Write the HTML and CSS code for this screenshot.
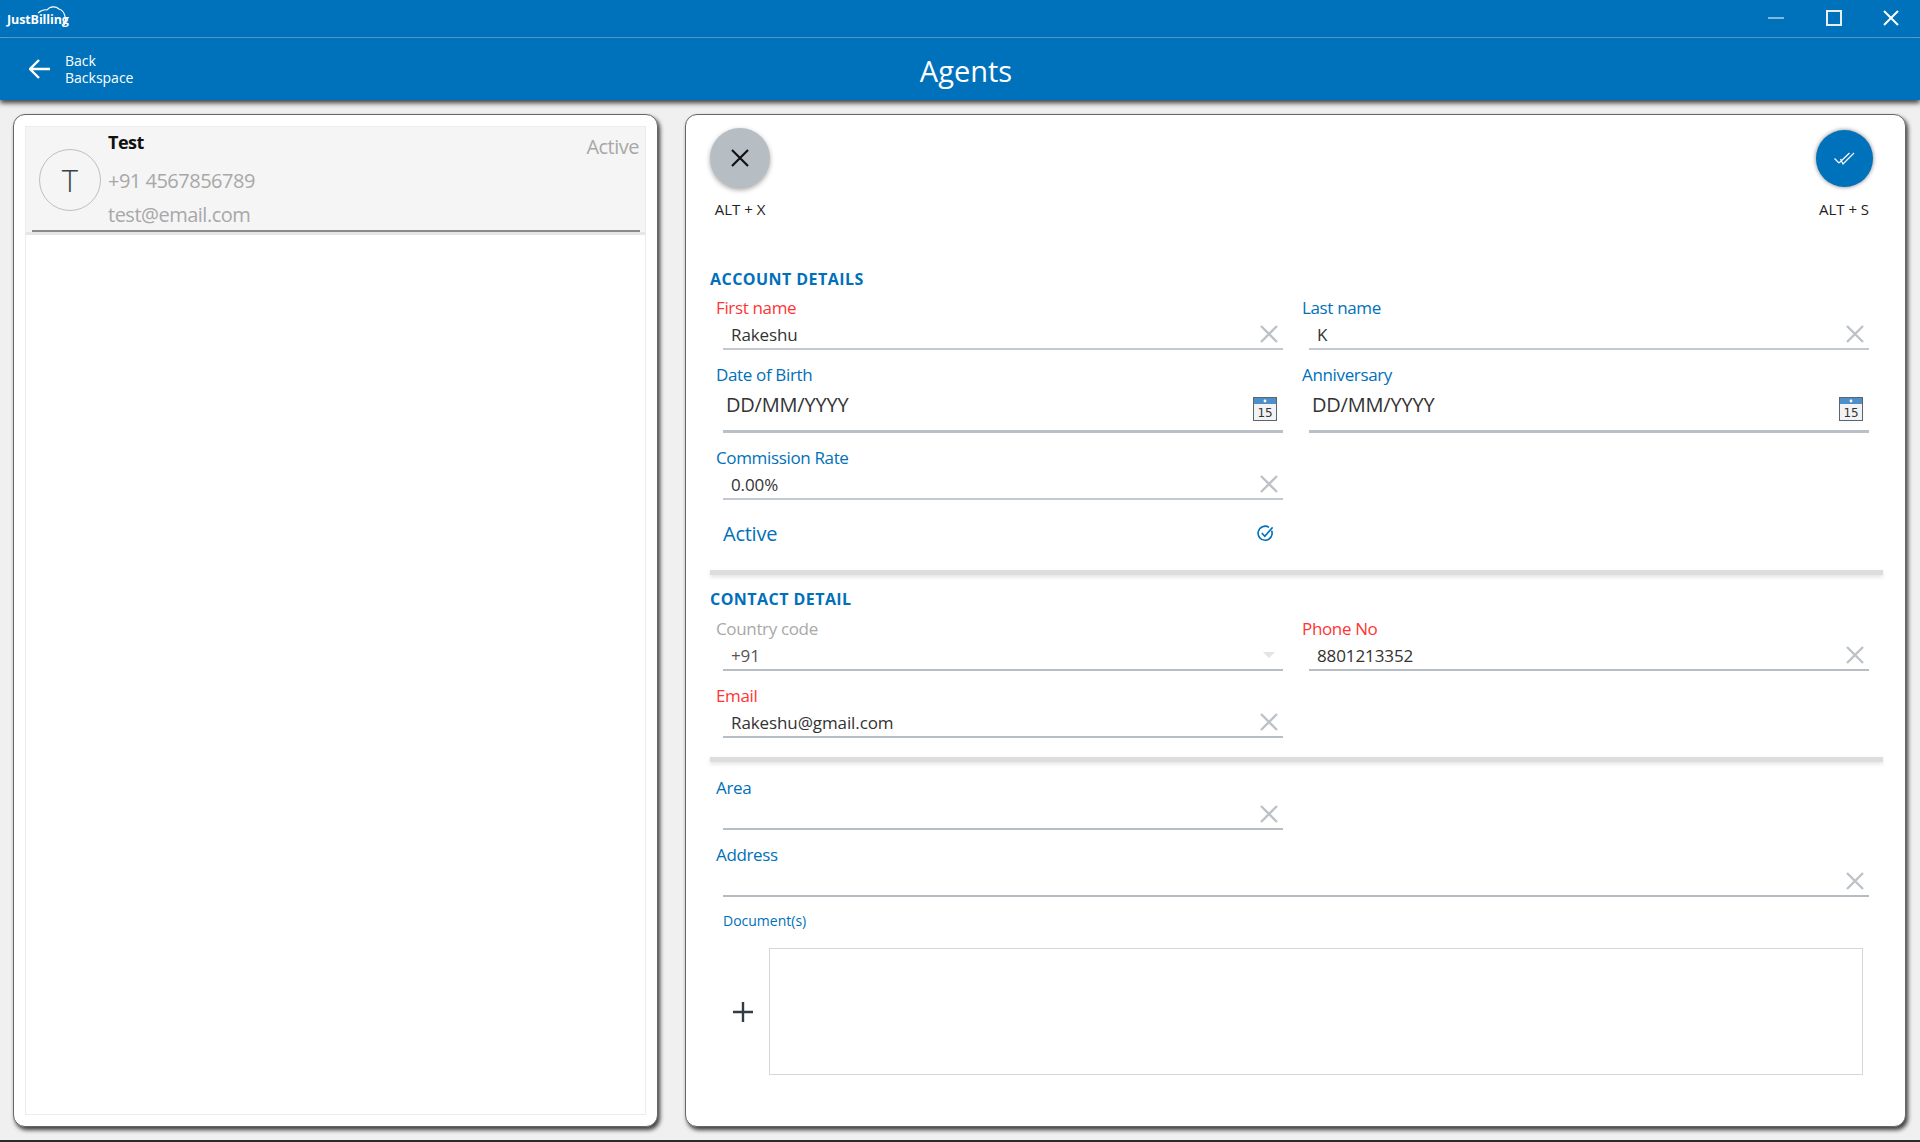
FILE: index.html
```html
<!DOCTYPE html>
<html lang="en">
<head>
    <meta charset="UTF-8">
    <meta name="viewport" content="width=device-width, initial-scale=1.0">
    <title>Agents</title>
    <link rel="stylesheet" href="styles.css">
</head>
<body>
    <div class="titlebar">
        <div class="logo">
            <span class="logo-text">JustBilling</span>
            <svg class="logo-cloud" width="32" height="26" viewBox="0 0 32 26" fill="none" stroke="#fff" stroke-width="1.1">
                <path d="M2 9C6 6 9 5.5 11 6c3-4 9-4 12-1 4 1 6 6 6.500 10 .5 3-.5 5-2.500 7"/>
            </svg>
        </div>
        <div class="window-buttons">
            <svg width="16" height="16" viewBox="0 0 16 16"><path d="M0 8h16" stroke="#fff" stroke-width="1"/></svg>
            <svg width="16" height="16" viewBox="0 0 16 16" fill="none"><rect x="1" y="1" width="14" height="14" stroke="#e8eef4" stroke-width="2"/></svg>
            <svg width="16" height="16" viewBox="0 0 16 16"><path d="M1 1l14 14M15 1L1 15" stroke="#fff" stroke-width="2"/></svg>
        </div>
    </div>

    <div class="toolbar">
        <div class="back">
            <svg width="22" height="20" viewBox="0 0 22 20" fill="none" stroke="#fff" stroke-width="2.4"><path d="M21 10H2M10 1l-9 9 9 9"/></svg>
            <div class="back-text">Back<br>Backspace</div>
        </div>
        <div class="page-title">Agents</div>
    </div>

    <div class="content">
        <div class="card list-card">
            <div class="list-inner">
                <div class="agent-row">
                    <div class="avatar">T</div>
                    <div class="agent-info">
                        <div class="agent-name">Test</div>
                        <div class="agent-sub agent-phone">+91 4567856789</div>
                        <div class="agent-sub agent-email">test@email.com</div>
                    </div>
                    <div class="agent-status">Active</div>
                </div>
            </div>
        </div>

        <div class="card form-card">
            <div class="actions">
                <div class="action">
                    <div class="round-btn cancel-btn">
                        <svg width="18" height="18" viewBox="0 0 18 18"><path d="M1 1l16 16M17 1L1 17" stroke="#111" stroke-width="2.2"/></svg>
                    </div>
                    <div class="shortcut">ALT + X</div>
                </div>
                <div class="action">
                    <div class="round-btn save-btn">
                        <svg width="21" height="13" viewBox="0 0 21 13" fill="none" stroke="#fff" stroke-width="1.2"><path d="M0.500 6.500L5 11M5 11L15.500 1M6.500 7L9 12 20 1"/></svg>
                    </div>
                    <div class="shortcut">ALT + S</div>
                </div>
            </div>

            <h3 class="section-title">ACCOUNT DETAILS</h3>
            <div class="form-grid">
                <div class="field">
                    <label class="required">First name</label>
                    <div class="input"><span>Rakeshu</span><svg class="clear" viewBox="0 0 18 18"><path d="M1 1l16 16M17 1L1 17"/></svg></div>
                </div>
                <div class="field">
                    <label>Last name</label>
                    <div class="input"><span>K</span><svg class="clear" viewBox="0 0 18 18"><path d="M1 1l16 16M17 1L1 17"/></svg></div>
                </div>
                <div class="field">
                    <label>Date of Birth</label>
                    <div class="input date-input"><span>DD/MM/YYYY</span>
                        <svg class="calendar" viewBox="0 0 24 24"><rect x=".5" y=".5" width="23" height="23" fill="#f2f3f4" stroke="#5a6570"/><rect x="1" y="1" width="22" height="6" fill="#4f8fc9"/><circle cx="12" cy="4" r="1.4" fill="#fff"/><text x="12" y="20" class="calendar-num">15</text></svg>
                    </div>
                </div>
                <div class="field">
                    <label>Anniversary</label>
                    <div class="input date-input"><span>DD/MM/YYYY</span>
                        <svg class="calendar" viewBox="0 0 24 24"><rect x=".5" y=".5" width="23" height="23" fill="#f2f3f4" stroke="#5a6570"/><rect x="1" y="1" width="22" height="6" fill="#4f8fc9"/><circle cx="12" cy="4" r="1.4" fill="#fff"/><text x="12" y="20" class="calendar-num">15</text></svg>
                    </div>
                </div>
                <div class="field">
                    <label>Commission Rate</label>
                    <div class="input"><span>0.00%</span><svg class="clear" viewBox="0 0 18 18"><path d="M1 1l16 16M17 1L1 17"/></svg></div>
                </div>
                <div class="field-empty"></div>
                <div class="toggle">
                    <span>Active</span>
                    <svg width="17" height="17" viewBox="0 0 17 17" fill="none" stroke="#0070ba" stroke-width="1.6"><path d="M14.600 5.600a7 7 0 1 1-2.600-3.200"/><path d="M4.800 8l3 3.200L15.600 2.400"/></svg>
                </div>
            </div>
            <div class="divider divider-one"></div>

            <h3 class="section-title">CONTACT DETAIL</h3>
            <div class="form-grid">
                <div class="field">
                    <label class="disabled">Country code</label>
                    <div class="input thin"><span class="muted">+91</span><span class="dropdown-arrow"></span></div>
                </div>
                <div class="field">
                    <label class="required">Phone No</label>
                    <div class="input thin"><span>8801213352</span><svg class="clear" viewBox="0 0 18 18"><path d="M1 1l16 16M17 1L1 17"/></svg></div>
                </div>
                <div class="field">
                    <label class="required">Email</label>
                    <div class="input thin"><span>Rakeshu@gmail.com</span><svg class="clear" viewBox="0 0 18 18"><path d="M1 1l16 16M17 1L1 17"/></svg></div>
                </div>
            </div>
            <div class="divider divider-two"></div>

            <div class="form-grid">
                <div class="field">
                    <label>Area</label>
                    <div class="input thin"><span></span><svg class="clear" viewBox="0 0 18 18"><path d="M1 1l16 16M17 1L1 17"/></svg></div>
                </div>
                <div class="field-empty"></div>
                <div class="field field-wide">
                    <label>Address</label>
                    <div class="input thin"><span></span><svg class="clear" viewBox="0 0 18 18"><path d="M1 1l16 16M17 1L1 17"/></svg></div>
                </div>
            </div>

            <div class="documents">
                <div class="documents-label">Document(s)</div>
                <div class="documents-row">
                    <svg class="add-doc" width="20" height="20" viewBox="0 0 20 20"><path d="M10 0v20M0 10h20" stroke="#333c44" stroke-width="2.4"/></svg>
                    <div class="documents-box"></div>
                </div>
            </div>
        </div>
    </div>
    <div class="bottom-strip"></div>
</body>
</html>
```

FILE: styles.css
```css
* {
    box-sizing: border-box;
}
html, body {
    height: 100%;
}
body {
    margin: 0;
    height: 1142px;
    overflow: hidden;
    display: flex;
    flex-direction: column;
    background-color: #f0f0f0;
    font-family: "Open Sans", "Noto Sans", sans-serif;
    color: #333;
}

/* top bars */
.titlebar {
    height: 38px;
    background-color: #0072bc;
    border-bottom: 1px solid #5aa3d6;
    display: flex;
    justify-content: space-between;
    align-items: center;
    padding: 0 21px 0 7px;
    flex: none;
}
.logo {
    position: relative;
    width: 62px;
    height: 30px;
}
.logo-text {
    position: absolute;
    left: 0;
    top: 8px;
    color: #fff;
    font-size: 12.5px;
    font-weight: 700;
    letter-spacing: -0.1px;
    line-height: 16px;
}
.logo-cloud {
    position: absolute;
    left: 29px;
    top: 0;
}
.window-buttons {
    display: flex;
    gap: 41.5px;
    margin-top: -1px;
}
.toolbar {
    height: 62px;
    flex: none;
    background-color: #0072bc;
    box-shadow: 0 3px 5px rgba(0, 0, 0, 0.75);
    display: flex;
    align-items: center;
    position: relative;
    color: #fff;
}
.back {
    display: flex;
    align-items: center;
    gap: 14px;
    padding-left: 29px;
}
.back-text {
    font-size: 14px;
    line-height: 17px;
}
.page-title {
    position: absolute;
    left: 0;
    right: 0;
    top: 13px;
    padding-left: 12px;
    text-align: center;
    font-size: 29px;
    line-height: 40px;
}

/* cards */
.content {
    flex: 1;
    display: flex;
    gap: 27px;
    padding: 14px 14px 13px 13px;
    min-height: 0;
}
.card {
    background-color: #fff;
    border: 1px solid #666;
    border-radius: 12px;
    box-shadow: 2px 3px 4px rgba(0, 0, 0, 0.75);
}
.list-card {
    width: 645px;
    padding: 11px;
}
.list-inner {
    height: 100%;
    border: 1px solid #ececec;
}
.agent-row {
    height: 108px;
    background-color: #f5f5f5;
    border-bottom: 3px solid #e6e6e6;
    margin: 0;
    display: flex;
    position: relative;
    padding-left: 13px;
}
.agent-row::after {
    content: "";
    position: absolute;
    left: 6px;
    right: 5px;
    bottom: 0;
    height: 2px;
    background-color: #8a8a8a;
}
.avatar {
    width: 62px;
    height: 62px;
    margin-top: 22px;
    border: 1px solid #b9c0c6;
    border-radius: 50%;
    display: flex;
    align-items: center;
    justify-content: center;
    font-size: 31px;
    font-weight: 300;
    color: #3a4148;
    flex: none;
}
.agent-info {
    margin-left: 7px;
    flex: 1;
}
.agent-name {
    font-size: 18px;
    font-weight: 700;
    color: #111;
    line-height: 26px;
    margin-top: 2px;
    letter-spacing: -0.5px;
}
.agent-sub {
    font-size: 20px;
    color: #a8a8a8;
    line-height: 28px;
    letter-spacing: -0.5px;
}
.agent-phone {
    margin-top: 12px;
}
.agent-email {
    margin-top: 6px;
}
.agent-status {
    font-size: 20px;
    color: #a8a8a8;
    line-height: 28px;
    position: absolute;
    right: 6px;
    top: 6px;
    letter-spacing: -0.5px;
}
.form-card {
    flex: 1;
    padding: 13px 22px 0 24px;
}

/* save / cancel */
.actions {
    display: flex;
    justify-content: space-between;
    padding-right: 9px;
}
.action {
    display: flex;
    flex-direction: column;
    align-items: center;
    width: 60px;
}
.round-btn {
    border-radius: 50%;
    display: flex;
    align-items: center;
    justify-content: center;
}
.cancel-btn {
    width: 60px;
    height: 60px;
    background-color: #b6bdc3;
    box-shadow: 0 2px 5px rgba(0, 0, 0, 0.35);
}
.save-btn {
    width: 57px;
    height: 57px;
    margin: 2px 0 1px;
    background-color: #0072bc;
    box-shadow: 0 0 4px rgba(0, 0, 0, 0.5);
}
.shortcut {
    font-size: 15px;
    line-height: 20px;
    margin-top: 11px;
    color: #222;
    white-space: nowrap;
}

/* form */
.section-title {
    margin: 50px 0 7px;
    font-size: 16px;
    line-height: 20px;
    font-weight: 700;
    color: #0070ba;
    letter-spacing: 0.45px;
}
.form-grid {
    display: grid;
    grid-template-columns: 567px 567px;
    column-gap: 19px;
    padding-left: 6px;
}
.field {
    margin-bottom: 13px;
}
.field-wide {
    grid-column: 1 / 3;
}
.field label {
    display: block;
    font-size: 17px;
    line-height: 24px;
    color: #0070ba;
    letter-spacing: -0.35px;
}
.field label.required {
    color: #ff3535;
}
.field label.disabled {
    color: #a9a9a9;
}
.input {
    margin-left: 7px;
    height: 30px;
    border-bottom: 2px solid #c3c9ce;
    display: flex;
    justify-content: space-between;
    align-items: center;
    padding: 0 3px 0 8px;
    font-size: 17px;
    color: #333;
    letter-spacing: -0.1px;
}
.input.thin {
    border-bottom-color: #b6bdc4;
}
.muted {
    color: #555;
}
.clear {
    width: 18px;
    height: 18px;
    margin-right: 2px;
    fill: none;
    stroke: #bcc2c7;
    stroke-width: 2.4;
}
.date-input {
    height: 46px;
    border-bottom: 3px solid #b9c0c7;
    align-items: flex-start;
    padding: 4px 6px 0 3px;
    font-size: 20px;
    letter-spacing: -0.2px;
}
.calendar {
    width: 24px;
    height: 24px;
    margin-top: 6px;
}
.calendar-num {
    font-size: 12px;
    font-family: "DejaVu Sans", sans-serif;
    fill: #333;
    text-anchor: middle;
}
.toggle {
    margin-left: 7px;
    margin-top: 5px;
    height: 30px;
    display: flex;
    justify-content: space-between;
    align-items: center;
    padding-right: 9px;
    font-size: 20px;
    color: #0070ba;
    letter-spacing: -0.25px;
}
.divider {
    height: 5px;
    background-color: #dcdddf;
    box-shadow: 0 2px 4px rgba(0, 0, 0, 0.12);
}
.divider-one {
    margin-top: 22px;
}
.divider-one + .section-title {
    margin-top: 14px;
    margin-bottom: 8px;
}
.divider-two {
    margin-top: 6px;
    margin-bottom: 14px;
}
.dropdown-arrow {
    width: 0;
    height: 0;
    margin-right: 5px;
    border-left: 6px solid transparent;
    border-right: 6px solid transparent;
    border-top: 6px solid #e2e4e6;
}
.documents {
    margin-left: 13px;
}
.documents-label {
    font-size: 14px;
    line-height: 20px;
    color: #0070ba;
    margin-top: 1px;
}
.documents-row {
    display: flex;
    align-items: center;
    margin-top: 17px;
}
.add-doc {
    margin-left: 10px;
}
.documents-box {
    width: 1094px;
    height: 127px;
    margin-left: 16px;
    border: 1px solid #d4d7da;
}
.bottom-strip {
    height: 2px;
    flex: none;
    background-color: #2b2b2b;
}
```
